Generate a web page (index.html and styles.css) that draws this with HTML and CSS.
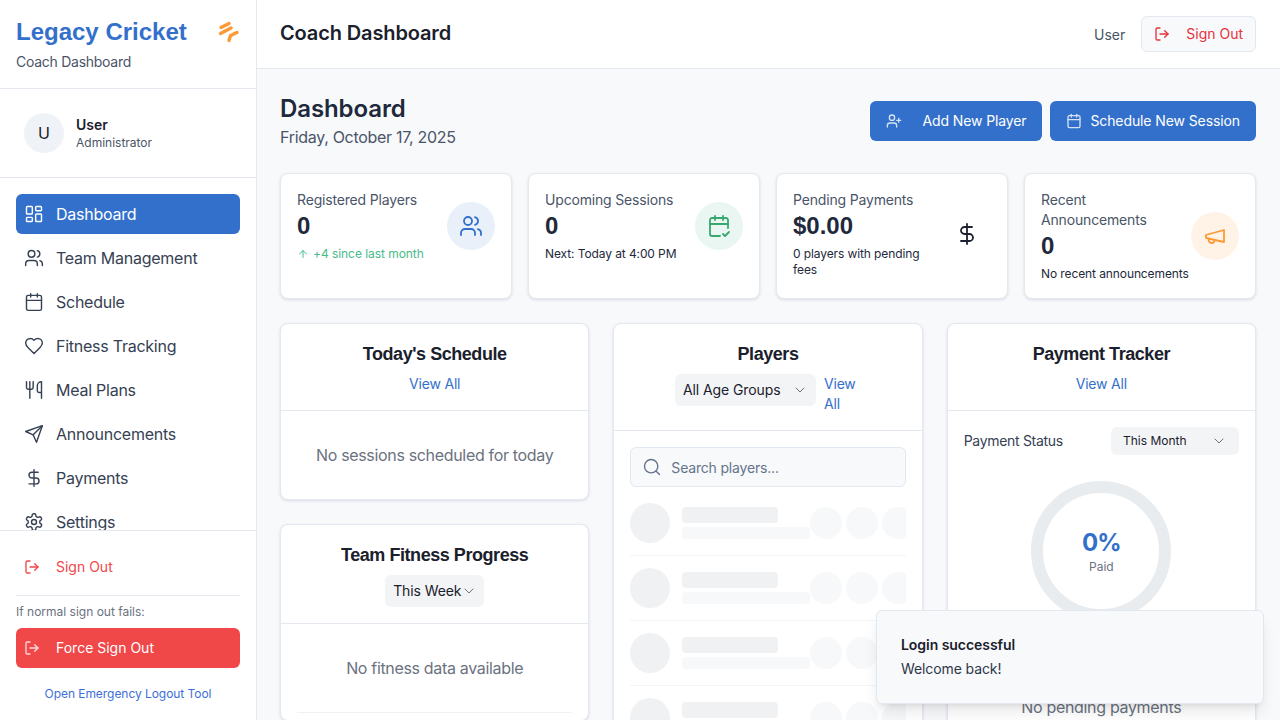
FILE: index.html
```html
<!DOCTYPE html>
<html lang="en">
<head>
    <meta charset="UTF-8">
    <title>Legacy Cricket - Coach Dashboard</title>
    <link rel="stylesheet" href="styles.css">
</head>
<body>
    <svg class="icon-defs" width="0" height="0">
        <symbol id="i-dashboard" viewBox="0 0 24 24"><rect x="3" y="3" width="7" height="9" rx="1"/><rect x="14" y="3" width="7" height="5" rx="1"/><rect x="14" y="12" width="7" height="9" rx="1"/><rect x="3" y="16" width="7" height="5" rx="1"/></symbol>
        <symbol id="i-users" viewBox="0 0 24 24"><path d="M16 21v-2a4 4 0 0 0-4-4H6a4 4 0 0 0-4 4v2"/><circle cx="9" cy="7" r="4"/><path d="M22 21v-2a4 4 0 0 0-3-3.87"/><path d="M16 3.13a4 4 0 0 1 0 7.75"/></symbol>
        <symbol id="i-calendar" viewBox="0 0 24 24"><path d="M8 2v4"/><path d="M16 2v4"/><rect x="3" y="4" width="18" height="18" rx="2"/><path d="M3 10h18"/></symbol>
        <symbol id="i-calendar-check" viewBox="0 0 24 24"><path d="M8 2v4"/><path d="M16 2v4"/><path d="M21 14V6a2 2 0 0 0-2-2H5a2 2 0 0 0-2 2v14a2 2 0 0 0 2 2h8"/><path d="M3 10h18"/><path d="m16 20 2 2 4-4"/></symbol>
        <symbol id="i-heart" viewBox="0 0 24 24"><path d="M19 14c1.49-1.46 3-3.21 3-5.5A5.5 5.5 0 0 0 16.5 3c-1.76 0-3 .5-4.5 2-1.5-1.5-2.74-2-4.5-2A5.5 5.5 0 0 0 2 8.500c0 2.300 1.500 4.050 3 5.500l7 7Z"/></symbol>
        <symbol id="i-utensils" viewBox="0 0 24 24"><path d="M3 2v7c0 1.100.9 2 2 2h4a2 2 0 0 0 2-2V2"/><path d="M7 2v20"/><path d="M21 15V2a5 5 0 0 0-5 5v6c0 1.100.9 2 2 2h3Zm0 0v7"/></symbol>
        <symbol id="i-send" viewBox="0 0 24 24"><path d="m22 2-7 20-4-9-9-4Z"/><path d="M22 2 11 13"/></symbol>
        <symbol id="i-dollar" viewBox="0 0 24 24"><path d="M12 2v20"/><path d="M17 5H9.500a3.500 3.500 0 0 0 0 7h5a3.500 3.500 0 0 1 0 7H6"/></symbol>
        <symbol id="i-settings" viewBox="0 0 24 24"><path d="M12.220 2h-.44a2 2 0 0 0-2 2v.18a2 2 0 0 1-1 1.730l-.43.25a2 2 0 0 1-2 0l-.15-.08a2 2 0 0 0-2.730.73l-.22.380a2 2 0 0 0 .73 2.730l.15.100a2 2 0 0 1 1 1.720v.51a2 2 0 0 1-1 1.740l-.15.090a2 2 0 0 0-.73 2.730l.22.380a2 2 0 0 0 2.730.73l.15-.08a2 2 0 0 1 2 0l.43.25a2 2 0 0 1 1 1.730V20a2 2 0 0 0 2 2h.44a2 2 0 0 0 2-2v-.18a2 2 0 0 1 1-1.730l.43-.25a2 2 0 0 1 2 0l.15.080a2 2 0 0 0 2.730-.73l.22-.39a2 2 0 0 0-.73-2.730l-.15-.08a2 2 0 0 1-1-1.740v-.5a2 2 0 0 1 1-1.740l.15-.09a2 2 0 0 0 .73-2.730l-.22-.380a2 2 0 0 0-2.730-.73l-.15.080a2 2 0 0 1-2 0l-.43-.25a2 2 0 0 1-1-1.730V4a2 2 0 0 0-2-2z"/><circle cx="12" cy="12" r="3"/></symbol>
        <symbol id="i-logout" viewBox="0 0 24 24"><path d="M9 21H5a2 2 0 0 1-2-2V5a2 2 0 0 1 2-2h4"/><path d="m16 17 5-5-5-5"/><path d="M21 12H9"/></symbol>
        <symbol id="i-user-plus" viewBox="0 0 24 24"><path d="M16 21v-2a4 4 0 0 0-4-4H6a4 4 0 0 0-4 4v2"/><circle cx="9" cy="7" r="4"/><path d="M19 8v6"/><path d="M22 11h-6"/></symbol>
        <symbol id="i-megaphone" viewBox="0 0 24 24"><path d="m3 11 18-5v12L3 14v-3z"/><path d="M11.600 16.800a3 3 0 1 1-5.800-1.600"/></symbol>
        <symbol id="i-search" viewBox="0 0 24 24"><circle cx="11" cy="11" r="8"/><path d="m21 21-4.300-4.300"/></symbol>
        <symbol id="i-chevron" viewBox="0 0 24 24"><path d="m6 9 6 6 6-6"/></symbol>
        <symbol id="i-arrow-up" viewBox="0 0 24 24"><path d="m5 12 7-7 7 7"/><path d="M12 19V5"/></symbol>
    </svg>

    <aside class="sidebar">
        <div class="brand">
            <div class="brand-text">
                <h1 class="brand-name">Legacy Cricket</h1>
                <p class="brand-sub">Coach Dashboard</p>
            </div>
            <svg class="brand-logo" viewBox="0 0 24 24"><path d="M5 7.500 13 3.500"/><path d="M4.500 13.500 15 8"/><path d="M17.500 14 21 12.500"/><path d="M17 14.500 14.500 15.500 13 20.500"/></svg>
        </div>

        <div class="user-box">
            <div class="avatar">U</div>
            <div>
                <div class="user-name">User</div>
                <div class="user-role">Administrator</div>
            </div>
        </div>

        <nav class="nav">
            <a class="nav-item active"><svg class="nav-icon"><use href="#i-dashboard"/></svg>Dashboard</a>
            <a class="nav-item"><svg class="nav-icon"><use href="#i-users"/></svg>Team Management</a>
            <a class="nav-item"><svg class="nav-icon"><use href="#i-calendar"/></svg>Schedule</a>
            <a class="nav-item"><svg class="nav-icon"><use href="#i-heart"/></svg>Fitness Tracking</a>
            <a class="nav-item"><svg class="nav-icon"><use href="#i-utensils"/></svg>Meal Plans</a>
            <a class="nav-item"><svg class="nav-icon"><use href="#i-send"/></svg>Announcements</a>
            <a class="nav-item"><svg class="nav-icon"><use href="#i-dollar"/></svg>Payments</a>
            <a class="nav-item"><svg class="nav-icon"><use href="#i-settings"/></svg>Settings</a>
        </nav>

        <div class="side-foot">
            <a class="side-signout"><svg class="foot-icon"><use href="#i-logout"/></svg>Sign Out</a>
            <p class="fail-note">If normal sign out fails:</p>
            <a class="force-btn"><svg class="foot-icon"><use href="#i-logout"/></svg>Force Sign Out</a>
            <a class="emergency">Open Emergency Logout Tool</a>
        </div>
    </aside>

    <div class="main">
        <header class="topbar">
            <h2 class="topbar-title">Coach Dashboard</h2>
            <div class="topbar-right">
                <span class="topbar-user">User</span>
                <button class="top-signout"><svg class="btn-icon"><use href="#i-logout"/></svg>Sign Out</button>
            </div>
        </header>

        <main class="content">
            <div class="page-head">
                <div>
                    <h2 class="page-title">Dashboard</h2>
                    <p class="page-date">Friday, October 17, 2025</p>
                </div>
                <div class="page-actions">
                    <button class="primary-btn add-btn"><svg class="btn-icon"><use href="#i-user-plus"/></svg>Add New Player</button>
                    <button class="primary-btn"><svg class="btn-icon"><use href="#i-calendar"/></svg>Schedule New Session</button>
                </div>
            </div>

            <section class="stats">
                <div class="stat">
                    <div class="stat-row">
                        <div class="stat-body">
                            <div class="stat-label">Registered Players</div>
                            <div class="stat-value">0</div>
                            <div class="stat-note up"><svg class="up-icon"><use href="#i-arrow-up"/></svg>+4 since last month</div>
                        </div>
                        <div class="stat-circle blue"><svg class="stat-icon"><use href="#i-users"/></svg></div>
                    </div>
                </div>
                <div class="stat">
                    <div class="stat-row">
                        <div class="stat-body">
                            <div class="stat-label">Upcoming Sessions</div>
                            <div class="stat-value">0</div>
                            <div class="stat-note">Next: Today at 4:00 PM</div>
                        </div>
                        <div class="stat-circle green"><svg class="stat-icon"><use href="#i-calendar-check"/></svg></div>
                    </div>
                </div>
                <div class="stat">
                    <div class="stat-row">
                        <div class="stat-body">
                            <div class="stat-label">Pending Payments</div>
                            <div class="stat-value">$0.00</div>
                            <div class="stat-note">0 players with pending fees</div>
                        </div>
                        <div class="stat-circle plain"><svg class="stat-icon"><use href="#i-dollar"/></svg></div>
                    </div>
                </div>
                <div class="stat">
                    <div class="stat-row">
                        <div class="stat-body">
                            <div class="stat-label">Recent Announcements</div>
                            <div class="stat-value">0</div>
                            <div class="stat-note">No recent announcements</div>
                        </div>
                        <div class="stat-circle orange"><svg class="stat-icon"><use href="#i-megaphone"/></svg></div>
                    </div>
                </div>
            </section>

            <section class="panels">
                <div class="col">
                    <div class="panel">
                        <div class="panel-head">
                            <h3 class="panel-title">Today's Schedule</h3>
                            <a class="view-all">View All</a>
                        </div>
                        <div class="empty">No sessions scheduled for today</div>
                    </div>
                    <div class="panel">
                        <div class="panel-head">
                            <h3 class="panel-title">Team Fitness Progress</h3>
                            <div class="select week-select">This Week<svg class="chev"><use href="#i-chevron"/></svg></div>
                        </div>
                        <div class="empty">No fitness data available</div>
                        <div class="panel-rule"></div>
                    </div>
                </div>

                <div class="col">
                    <div class="panel">
                        <div class="panel-head">
                            <h3 class="panel-title">Players</h3>
                            <div class="players-tools">
                                <div class="select age-select">All Age Groups<svg class="chev"><use href="#i-chevron"/></svg></div>
                                <a class="view-all view-wrap">View All</a>
                            </div>
                        </div>
                        <div class="players-body">
                            <div class="search"><svg class="search-icon"><use href="#i-search"/></svg>Search players...</div>
                            <div class="skeleton-list">
                                <div class="skeleton-row"><i class="sk-avatar"></i><div class="sk-lines"><i class="sk-line1"></i><i class="sk-line2"></i></div><i class="sk-dot"></i><i class="sk-dot"></i><i class="sk-dot"></i></div>
                                <div class="skeleton-row"><i class="sk-avatar"></i><div class="sk-lines"><i class="sk-line1"></i><i class="sk-line2"></i></div><i class="sk-dot"></i><i class="sk-dot"></i><i class="sk-dot"></i></div>
                                <div class="skeleton-row"><i class="sk-avatar"></i><div class="sk-lines"><i class="sk-line1"></i><i class="sk-line2"></i></div><i class="sk-dot"></i><i class="sk-dot"></i><i class="sk-dot"></i></div>
                                <div class="skeleton-row"><i class="sk-avatar"></i><div class="sk-lines"><i class="sk-line1"></i><i class="sk-line2"></i></div><i class="sk-dot"></i><i class="sk-dot"></i><i class="sk-dot"></i></div>
                            </div>
                        </div>
                    </div>
                </div>

                <div class="col">
                    <div class="panel">
                        <div class="panel-head">
                            <h3 class="panel-title">Payment Tracker</h3>
                            <a class="view-all">View All</a>
                        </div>
                        <div class="pay-body">
                            <div class="pay-row">
                                <span class="pay-label">Payment Status</span>
                                <div class="select month-select">This Month<svg class="chev"><use href="#i-chevron"/></svg></div>
                            </div>
                            <div class="ring">
                                <div class="ring-value">0%</div>
                                <div class="ring-label">Paid</div>
                            </div>
                            <div class="pay-empty">No pending payments</div>
                        </div>
                    </div>
                </div>
            </section>
        </main>
    </div>

    <div class="toast">
        <div class="toast-title">Login successful</div>
        <div class="toast-text">Welcome back!</div>
    </div>
</body>
</html>
```

FILE: styles.css
```css
* {
    box-sizing: border-box;
}

html, body {
    height: 100%;
}

body {
    margin: 0;
    display: flex;
    height: 720px;
    overflow: hidden;
    font-family: Inter, "Noto Sans", sans-serif;
    font-size: 14px;
    color: #1a202c;
    background-color: #f8f9fb;
}

h1, h2, h3, p {
    margin: 0;
}

svg {
    fill: none;
    stroke: currentColor;
    stroke-width: 2;
    stroke-linecap: round;
    stroke-linejoin: round;
    flex-shrink: 0;
}

.icon-defs {
    position: absolute;
}

/* sidebar */
.sidebar {
    width: 257px;
    flex-shrink: 0;
    display: flex;
    flex-direction: column;
    background-color: #fff;
    border-right: 1px solid #e5e8ee;
}

.brand {
    height: 89px;
    flex-shrink: 0;
    padding: 17px 16px 0;
    display: flex;
    justify-content: space-between;
    border-bottom: 1px solid #e5e8ee;
}

.brand-name {
    font-family: "Liberation Sans", Arial, sans-serif;
    font-size: 24px;
    line-height: 30px;
    font-weight: 700;
    color: #3370cc;
}

.brand-sub {
    margin-top: 5px;
    line-height: 20px;
    letter-spacing: -0.27px;
    color: #4a5568;
}

.brand-logo {
    width: 24px;
    height: 24px;
    margin-top: 3px;
    color: #fd9a36;
    stroke-width: 3.4;
}

.user-box {
    height: 89px;
    flex-shrink: 0;
    padding: 0 24px;
    display: flex;
    align-items: center;
    gap: 12px;
    border-bottom: 1px solid #e5e8ee;
}

.avatar {
    width: 40px;
    height: 40px;
    border-radius: 50%;
    display: flex;
    align-items: center;
    justify-content: center;
    background-color: #eff3f8;
    font-size: 16px;
    color: #1a202c;
}

.user-name {
    font-weight: 600;
    line-height: 20px;
}

.user-role {
    font-size: 12px;
    line-height: 16px;
    color: #4a5568;
}

.nav {
    flex: 1;
    min-height: 0;
    overflow: hidden;
    padding: 16px 16px 0;
    display: flex;
    flex-direction: column;
    gap: 4px;
}

.nav-item {
    height: 40px;
    flex-shrink: 0;
    padding: 0 8px;
    display: flex;
    align-items: center;
    gap: 12px;
    border-radius: 6px;
    font-size: 16px;
    letter-spacing: -0.25px;
    color: #364153;
}

.nav-item.active {
    background-color: #3370cc;
    color: #fff;
}

.nav-icon {
    width: 20px;
    height: 20px;
    stroke-width: 1.7;
}

.side-foot {
    height: 190px;
    flex-shrink: 0;
    padding: 16px 16px 0;
    border-top: 1px solid #e5e8ee;
}

.side-signout, .force-btn {
    height: 40px;
    padding: 0 8px 1px;
    display: flex;
    align-items: center;
    gap: 16px;
    border-radius: 6px;
}

.side-signout {
    color: #f04749;
}

.foot-icon {
    width: 16px;
    height: 16px;
}

.fail-note {
    margin-top: 8px;
    padding-top: 8px;
    border-top: 1px solid #e5e8ee;
    font-size: 12px;
    line-height: 16px;
    color: #6b7280;
}

.force-btn {
    margin-top: 8px;
    background-color: #f04749;
    color: #fff;
}

.force-btn .foot-icon {
    opacity: 0.8;
}

.emergency {
    display: block;
    margin-top: 18px;
    text-align: center;
    font-size: 12px;
    line-height: 16px;
    letter-spacing: -0.05px;
    color: #3b6fd9;
}

/* top bar */
.main {
    flex: 1;
    min-width: 0;
    margin-left: -1px;
    display: flex;
    flex-direction: column;
}

.topbar {
    height: 69px;
    flex-shrink: 0;
    padding: 0 24px;
    display: flex;
    align-items: center;
    justify-content: space-between;
    background-color: #fff;
    border-bottom: 1px solid #e5e8ee;
    box-shadow: inset 1px 0 0 #e5e8ee;
}

.topbar-title {
    font-size: 20px;
    line-height: 28px;
    font-weight: 600;
    letter-spacing: -0.13px;
    margin-bottom: 2px;
    color: #1a202c;
}

.topbar-right {
    display: flex;
    align-items: center;
    gap: 16px;
}

.topbar-user {
    color: #4a5568;
}

button {
    font-family: inherit;
    font-size: 14px;
    cursor: pointer;
}

.top-signout {
    height: 36px;
    padding: 0 12px 1px;
    display: flex;
    align-items: center;
    gap: 16px;
    background-color: #f8f9fb;
    border: 1px solid #e2e8f0;
    border-radius: 6px;
    color: #e5323b;
}

.btn-icon {
    width: 16px;
    height: 16px;
}

/* page */
.content {
    flex: 1;
    min-height: 0;
    overflow: hidden;
    padding: 24px 24px 0;
}

.page-head {
    display: flex;
    justify-content: space-between;
    align-items: center;
}

.page-title {
    font-size: 24px;
    line-height: 32px;
    font-weight: 600;
    letter-spacing: -0.1px;
    color: #1e293b;
}

.page-date {
    font-size: 16px;
    line-height: 24px;
    letter-spacing: -0.3px;
    color: #4a5568;
}

.page-actions {
    display: flex;
    gap: 8px;
}

.primary-btn {
    height: 40px;
    padding: 0 16px 1px;
    display: flex;
    align-items: center;
    gap: 8px;
    background-color: #3370cc;
    border: 0;
    border-radius: 6px;
    letter-spacing: -0.1px;
    color: #fff;
}

.primary-btn .btn-icon {
    opacity: 0.8;
}

.add-btn {
    gap: 21px;
    letter-spacing: -0.13px;
}

.stats {
    margin-top: 24px;
    display: grid;
    grid-template-columns: repeat(4, minmax(0, 1fr));
    gap: 16px;
}

.stat {
    padding: 16px;
    background-color: #fff;
    border: 1px solid #e5e8ee;
    border-radius: 8px;
    box-shadow: 0 1px 3px rgba(51, 70, 110, 0.16);
}

.stat-row {
    display: flex;
    align-items: center;
    justify-content: space-between;
}

.stat-body {
    flex: 1;
    min-width: 0;
}

.stat-label {
    line-height: 20px;
    letter-spacing: -0.17px;
    color: #4a5568;
}

.stat-value {
    font-family: "Liberation Sans", Arial, sans-serif;
    font-size: 24px;
    line-height: 32px;
    font-weight: 700;
    color: #1e293b;
}

.stat-note {
    margin-top: 4px;
    font-size: 12px;
    line-height: 16px;
    letter-spacing: -0.1px;
    color: #1e293b;
}

.stat-note.up {
    display: flex;
    align-items: center;
    gap: 4px;
    letter-spacing: -0.05px;
    color: #48bb8b;
}

.up-icon {
    width: 12px;
    height: 12px;
}

.stat-circle {
    width: 48px;
    height: 48px;
    border-radius: 50%;
    flex-shrink: 0;
    display: flex;
    align-items: center;
    justify-content: center;
}

.stat-icon {
    width: 24px;
    height: 24px;
    stroke-width: 1.8;
}

.stat-circle.blue {
    background-color: #e9f0fa;
    color: #3370cc;
}

.stat-circle.green {
    background-color: #e9f6f1;
    color: #38a871;
}

.stat-circle.plain {
    color: #1a202c;
}

.stat-circle.orange {
    background-color: #fff3e8;
    color: #fd9a36;
}

/* panels */
.panels {
    margin-top: 24px;
    display: grid;
    grid-template-columns: repeat(3, minmax(0, 1fr));
    gap: 24px;
    align-items: start;
}

.col {
    display: flex;
    flex-direction: column;
    gap: 24px;
    min-width: 0;
}

.panel {
    background-color: #fff;
    border: 1px solid #e5e8ee;
    border-radius: 8px;
    box-shadow: 0 1px 3px rgba(51, 70, 110, 0.16);
}

.panel-head {
    padding: 16px;
    display: flex;
    flex-direction: column;
    align-items: center;
    gap: 6px;
    border-bottom: 1px solid #e5e8ee;
}

.panel-title {
    font-family: "Liberation Sans", Arial, sans-serif;
    font-size: 18px;
    line-height: 28px;
    font-weight: 700;
    letter-spacing: -0.45px;
    color: #1a202c;
}

.view-all {
    line-height: 20px;
    letter-spacing: -0.2px;
    color: #3370cc;
}

.empty {
    padding: 32px 16px;
    text-align: center;
    font-size: 16px;
    line-height: 24px;
    letter-spacing: -0.33px;
    color: #6b7280;
}

.panel-rule {
    margin: 0 16px;
    border-top: 1px solid #f0f1f4;
    height: 8px;
}

.select {
    height: 32px;
    padding: 0 8px 1px;
    display: flex;
    align-items: center;
    justify-content: space-between;
    background-color: #f3f4f6;
    border-radius: 6px;
    white-space: nowrap;
    letter-spacing: -0.1px;
    color: #1a202c;
}

.chev {
    width: 16px;
    height: 16px;
    color: #6b7280;
    stroke-width: 1.5;
}

.week-select {
    width: 99px;
}

.players-tools {
    display: flex;
    align-items: flex-start;
    gap: 8px;
}

.age-select {
    width: 141px;
}

.view-wrap {
    width: 37px;
}

.players-body {
    padding: 16px;
}

.search {
    height: 40px;
    padding: 0 12px;
    display: flex;
    align-items: center;
    gap: 9px;
    background-color: #f8f9fb;
    border: 1px solid #e2e8f0;
    border-radius: 6px;
    letter-spacing: -0.18px;
    color: #64748b;
}

.search-icon {
    width: 20px;
    height: 20px;
    margin-left: -1px;
    color: #64748b;
    stroke-width: 1.7;
}

.skeleton-list {
    margin-top: 4px;
}

.skeleton-row {
    padding: 12px 0;
    display: flex;
    align-items: center;
    overflow: hidden;
    border-bottom: 1px solid #f3f4f6;
}

.skeleton-row i {
    display: block;
    flex-shrink: 0;
}

.sk-avatar {
    width: 40px;
    height: 40px;
    border-radius: 50%;
    background-color: #f0f1f3;
    margin-right: 12px;
}

.sk-lines {
    width: 128px;
    flex-shrink: 0;
}

.sk-line1 {
    width: 96px;
    height: 16px;
    border-radius: 4px;
    background-color: #f0f1f3;
}

.sk-line2 {
    height: 12px;
    margin-top: 4px;
    border-radius: 4px;
    background-color: #f7f8f9;
}

.skeleton-row .sk-dot {
    width: 32px;
    height: 32px;
    margin-right: 4px;
    border-radius: 50%;
    background-color: #f7f8f9;
}

.pay-body {
    padding: 16px;
}

.pay-row {
    display: flex;
    align-items: center;
    justify-content: space-between;
    height: 28px;
}

.pay-label {
    margin-bottom: 2px;
    letter-spacing: -0.3px;
    color: #364153;
}

.month-select {
    width: 128px;
    height: 28px;
    padding: 0 12px 1px;
    font-size: 12px;
    letter-spacing: 0;
}

.ring {
    width: 140px;
    height: 140px;
    margin: 26px auto 0;
    border: 12px solid #e9ecef;
    border-radius: 50%;
    display: flex;
    flex-direction: column;
    align-items: center;
    justify-content: center;
}

.ring-value {
    font-size: 24px;
    line-height: 32px;
    font-weight: 700;
    letter-spacing: -1px;
    color: #3370cc;
}

.ring-label {
    font-size: 12px;
    line-height: 16px;
    color: #6b7280;
}

.pay-empty {
    margin-top: 74px;
    text-align: center;
    font-size: 16px;
    line-height: 24px;
    letter-spacing: -0.33px;
    color: #6b7280;
}

.toast {
    position: absolute;
    left: 876px;
    top: 610px;
    width: 388px;
    height: 94px;
    padding: 24px;
    background-color: #f8f9fb;
    border: 1px solid #e2e8f0;
    border-radius: 6px;
    box-shadow: 0 10px 15px -3px rgba(0, 0, 0, 0.1), 0 4px 6px -4px rgba(0, 0, 0, 0.1);
}

.toast-title {
    font-weight: 600;
    line-height: 20px;
    letter-spacing: -0.05px;
    color: #1a202c;
}

.toast-text {
    margin-top: 4px;
    line-height: 20px;
    letter-spacing: -0.1px;
    color: #2d3748;
}
```
